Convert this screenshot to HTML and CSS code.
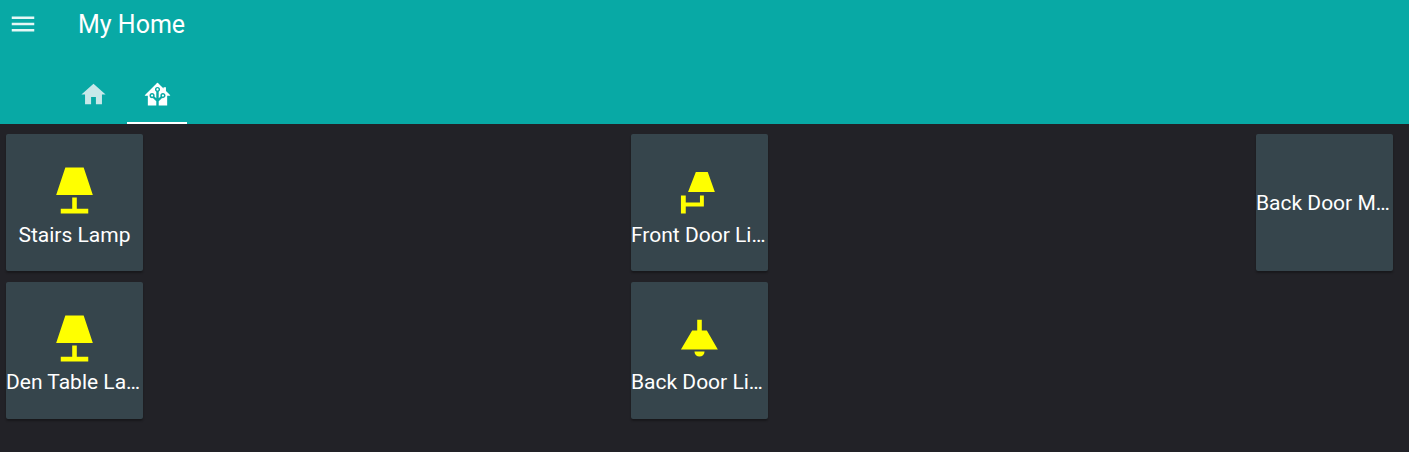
FILE: index.html
```html
<!DOCTYPE html>
<html lang="en">
<head>
<meta charset="utf-8">
<title>My Home</title>
<link rel="stylesheet" href="styles.css">
</head>
<body>
<header class="app-header">
  <div class="toolbar">
    <svg class="menu-icon" viewBox="0 0 24 24"><path d="M3,6H21V8H3V6M3,11H21V13H3V11M3,16H21V18H3V16Z"/></svg>
    <div class="title">My Home</div>
  </div>
  <nav class="tabs">
    <div class="tab">
      <svg class="tab-icon" viewBox="0 0 24 24"><path d="M10,20V14H14V20H19V12H22L12,3L2,12H5V20H10Z"/></svg>
    </div>
    <div class="tab tab-active">
      <svg class="tab-icon" viewBox="0 0 24 24"><path d="M21.8,13H20V21H13V17.67L15.79,14.88L16.5,15C17.66,15 18.6,14.06 18.6,12.9C18.6,11.74 17.66,10.8 16.5,10.8A2.1,2.1 0 0,0 14.4,12.9L14.5,13.61L13,15.13V9.65C13.66,9.29 14.1,8.6 14.1,7.8A2.1,2.1 0 0,0 12,5.7A2.1,2.1 0 0,0 9.9,7.8C9.9,8.6 10.34,9.29 11,9.65V15.13L9.5,13.61L9.6,12.9A2.1,2.1 0 0,0 7.5,10.8A2.1,2.1 0 0,0 5.4,12.9A2.1,2.1 0 0,0 7.5,15L8.21,14.88L11,17.67V21H4V13H2.25C1.83,13 1.42,13 1.42,12.79C1.43,12.57 1.85,12.15 2.28,11.72L11,3C11.33,2.67 11.67,2.33 12,2.33C12.33,2.33 12.67,2.67 13,3L17,7V6H19V9L21.78,11.78C22.15,12.15 22.55,12.55 22.56,12.76C22.57,12.97 22.19,13 21.8,13M7.5,12A0.9,0.9 0 0,1 8.4,12.9A0.9,0.9 0 0,1 7.5,13.8A0.9,0.9 0 0,1 6.6,12.9A0.9,0.9 0 0,1 7.5,12M16.5,12C17,12 17.4,12.4 17.4,12.9C17.4,13.4 17,13.8 16.5,13.8A0.9,0.9 0 0,1 15.6,12.9A0.9,0.9 0 0,1 16.5,12M12,6.9C12.5,6.9 12.9,7.3 12.9,7.8C12.9,8.3 12.5,8.7 12,8.7C11.5,8.7 11.1,8.3 11.1,7.8C11.1,7.3 11.5,6.9 12,6.9Z"/></svg>
    </div>
  </nav>
</header>
<main class="grid">
  <section class="column">
    <div class="card">
      <svg class="card-icon" viewBox="0 0 24 24"><path d="M8,2H16L20,14H4L8,2M11,15H13V20H18V22H6V20H11V15Z"/></svg>
      <div class="label">Stairs Lamp</div>
    </div>
    <div class="card card-lower">
      <svg class="card-icon" viewBox="0 0 24 24"><path d="M8,2H16L20,14H4L8,2M11,15H13V20H18V22H6V20H11V15Z"/></svg>
      <div class="label">Den Table Lamp</div>
    </div>
  </section>
  <section class="column">
    <div class="card">
      <svg class="card-icon" viewBox="0 0 24 24"><path d="M10.4,3.9H15.6L18.7,12.7H7L10.4,3.9M3.9,14.2H6V17.2H12.2V14.2H13.9V19H6V22H3.9V14.2Z"/></svg>
      <div class="label">Front Door Light</div>
    </div>
    <div class="card card-lower">
      <svg class="card-icon" viewBox="0 0 24 24"><path d="M11,3.8H13V8.5H15.2L20,16.8H3.9L8.8,8.5H11V3.8M9.8,17.7H14.2A2.2,2.2 0 0,1 9.8,17.7Z"/></svg>
      <div class="label">Back Door Light</div>
    </div>
  </section>
  <section class="column">
    <div class="card">
      <div class="label">Back Door Motion</div>
    </div>
  </section>
</main>
</body>
</html>
```
FILE: styles.css
```css
* {
  box-sizing: border-box;
}

html,
body {
  height: 100%;
}

body {
  margin: 0;
  overflow: hidden;
  background: #222227;
  font-family: Roboto, "Liberation Sans", sans-serif;
  color: #fff;
}

.app-header {
  height: 124px;
  background: #08a9a5;
  display: flex;
  flex-direction: column;
}

.toolbar {
  height: 60px;
  display: flex;
  align-items: flex-start;
  padding: 9px 0 0 8px;
}

.menu-icon {
  width: 30px;
  height: 30px;
  fill: #e6f7f6;
  flex: none;
}

.title {
  margin-left: 40px;
  font-size: 25px;
  line-height: 32px;
}

.tabs {
  display: flex;
  gap: 4px;
  padding-left: 63px;
  height: 64px;
}

.tab {
  width: 60px;
  display: flex;
  align-items: flex-start;
  justify-content: center;
  padding-top: 20px;
  border-bottom: 2px solid transparent;
}

.tab-active {
  border-bottom-color: #fff;
}

.tab-icon {
  width: 29px;
  height: 29px;
  fill: #c8e8e9;
}

.tab-active .tab-icon {
  fill: #fff;
}

.grid {
  display: flex;
  justify-content: space-between;
  padding: 10px 16px 0 6px;
}

.column {
  width: 137px;
  display: flex;
  flex-direction: column;
  gap: 11px;
}

.card {
  width: 137px;
  height: 137px;
  border-radius: 2px;
  background: #36454c;
  box-shadow: 0 2px 2px rgba(0, 0, 0, 0.3);
  display: flex;
  flex-direction: column;
  align-items: center;
  justify-content: center;
}

.card-icon {
  width: 55px;
  height: 55px;
  flex: none;
  fill: #ffff00;
  margin-bottom: 9px;
}

.label {
  width: 100%;
  margin: -4px 0;
  font-size: 21px;
  line-height: 24px;
  text-align: center;
  white-space: nowrap;
  overflow: hidden;
  text-overflow: ellipsis;
}

.card-lower .card-icon {
  margin-bottom: 8px;
}
```
